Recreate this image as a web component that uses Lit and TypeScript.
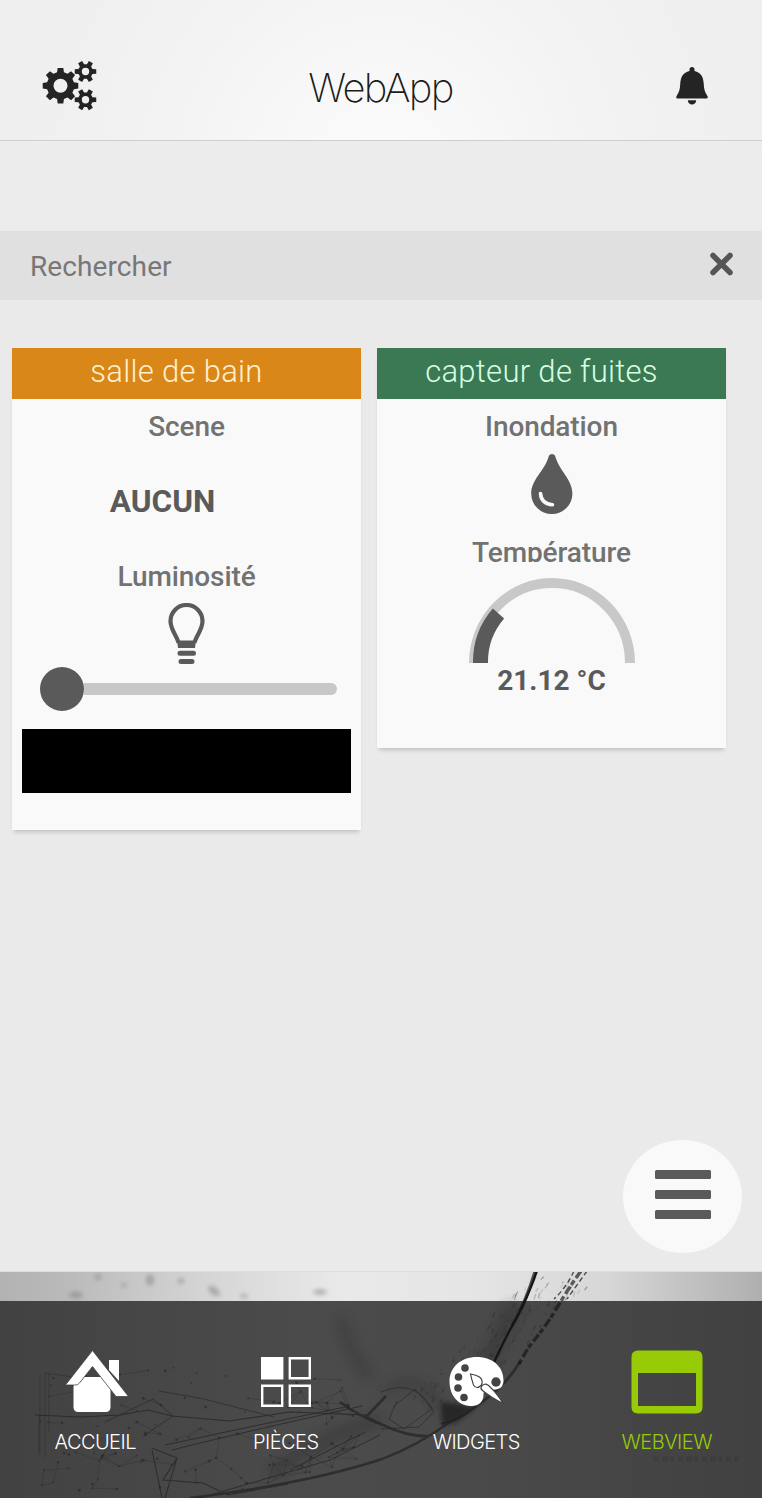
import { LitElement, html, svg, css } from "lit";
import { customElement } from "lit/decorators.js";

function gear(cx: number, cy: number, outer: number, inner: number, hole: number, teeth: number): string {
  const step = (Math.PI * 2) / teeth;
  const at = (r: number, a: number) => `${(cx + r * Math.cos(a)).toFixed(2)} ${(cy + r * Math.sin(a)).toFixed(2)}`;
  const pts: string[] = [];
  for (let i = 0; i < teeth; i++) {
    const a = i * step;
    pts.push(at(inner, a - step * 0.32), at(outer, a - step * 0.2), at(outer, a + step * 0.2), at(inner, a + step * 0.32));
  }
  return `M${pts.join("L")}Z M${cx - hole} ${cy}a${hole} ${hole} 0 1 0 ${hole * 2} 0a${hole} ${hole} 0 1 0 ${-hole * 2} 0Z`;
}

function random(seed: number) {
  let s = seed;
  return () => ((s = (s * 16807) % 2147483647) / 2147483647);
}

@customElement("mesh-backdrop")
class MeshBackdrop extends LitElement {
  static styles = css`
    :host { display: block; }
    svg { display: block; width: 100%; height: 100%; }
  `;

  private mesh() {
    const rnd = random(41);
    const nodes: [number, number][] = [];
    for (let i = 0; i < 125; i++) {
      const x = 40 + rnd() * 320;
      const top = 1365 + Math.abs(x - 170) * 0.08;
      nodes.push([x, top + rnd() * (1492 - top - Math.max(0, x - 240) * 0.25)]);
    }
    const links: unknown[] = [];
    nodes.forEach(([x, y], i) => {
      nodes
        .slice(i + 1)
        .filter(([u, v]) => Math.hypot(u - x, (v - y) * 1.3) < 29 && rnd() > 0.6)
        .forEach(([u, v]) => links.push(svg`<path d="M${x} ${y}L${u} ${v}" />`));
    });
    const dots = nodes.map(([x, y]) => svg`<circle cx=${x} cy=${y} r=${0.8 + rnd() * 0.8} />`);
    return svg`<g stroke="#222" stroke-width=".6" opacity=".4" fill="none">${links}</g><g fill="#222" opacity=".5">${dots}</g>`;
  }

  private specks() {
    const rnd = random(97);
    for (let i = 0; i < 5; i++) rnd();
    return Array.from({ length: 130 }, () => {
      const t = rnd();
      const x = 592 - t * 130 - rnd() * 60;
      const y = 1272 + t * 130 + rnd() * 12;
      return svg`<path d="M${x} ${y}l${-1 - rnd() * 2} ${2 + rnd() * 4}" opacity=${0.1 + rnd() * 0.4} />`;
    });
  }

  render() {
    return html`
      <svg viewBox="0 1271 762 227" preserveAspectRatio="none" aria-hidden="true">
        <defs>
          <linearGradient id="sky">
            <stop offset="0" stop-color="#b2b2b2" />
            <stop offset=".09" stop-color="#bababa" />
            <stop offset=".27" stop-color="#d5d5d5" />
            <stop offset=".45" stop-color="#e9e9e9" />
            <stop offset=".62" stop-color="#e5e5e5" />
            <stop offset=".8" stop-color="#d6d6d6" />
            <stop offset="1" stop-color="#afafaf" />
          </linearGradient>
          <linearGradient id="floor">
            <stop offset="0" stop-color="#424242" />
            <stop offset=".4" stop-color="#4b4b4b" />
            <stop offset=".62" stop-color="#4a4a4a" />
            <stop offset="1" stop-color="#414141" />
          </linearGradient>
          <filter id="soft" filterUnits="userSpaceOnUse" x="0" y="1260" width="762" height="240"><feGaussianBlur stdDeviation="2.2" /></filter>
          <filter id="soft-wide" filterUnits="userSpaceOnUse" x="0" y="1260" width="762" height="240"><feGaussianBlur stdDeviation="6" /></filter>
          <filter id="soft-thin" filterUnits="userSpaceOnUse" x="0" y="1260" width="762" height="240"><feGaussianBlur stdDeviation=".7" /></filter>
        </defs>
        <rect x="0" y="1271" width="762" height="30" fill="url(#sky)" />
        <rect x="0" y="1301" width="762" height="197" fill="url(#floor)" />
        <g fill="#777" opacity=".45" filter="url(#soft)">
          <ellipse cx="76" cy="1295" rx="7" ry="3.5" /><ellipse cx="98" cy="1277" rx="3" ry="3" />
          <ellipse cx="150" cy="1280" rx="4" ry="6" /><ellipse cx="124" cy="1285" rx="3" ry="2" />
          <ellipse cx="181" cy="1281" rx="3" ry="3" /><ellipse cx="214" cy="1291" rx="7" ry="4" transform="rotate(40 214 1291)" />
          <ellipse cx="320" cy="1292" rx="7" ry="3" /><ellipse cx="244" cy="1296" rx="4" ry="2" />
        </g>
        <g fill="none" stroke="#222" opacity=".32" filter="url(#soft-wide)">
          <path d="M340 1318q10 35 30 60" stroke-width="8" />
          <path d="M515 1305q-25 50-45 95" stroke-width="14" />
          <path d="M270 1475q40-35 110-55" stroke-width="12" />
          <path d="M385 1390q40-20 55 20" stroke-width="8" />
        </g>
        ${this.mesh()}
        <g fill="none" stroke="#1c1c1c" opacity=".6" filter="url(#soft-thin)">
          <path d="M35 1415l45 2 40-2 28-5 24 6 58 5 60-9 75 3 16 9" stroke-width="1.200" />
          <path d="M105 1422l48-23 20 17-30 20m16-45l45 8 70 18" stroke-width=".8" />
          <path d="M172 1450q80-20 190-44M165 1445l70-15 115-24" stroke-width="1" />
          <path d="M152 1450l10 48m-10-50l25 10-12 40m12-40l-14 22 40 3 25 12 60-11" stroke-width="1.100" />
          <path d="M190 1498q120-15 192-39 35-13 68-37" stroke-width="2.400" />
          <path d="M200 1498l130-38 50-25m-90 35l75-38" stroke-width="1" />
          <path d="M340 1402q20 15 43 23 25 12 46 11M367 1416l19-20" stroke-width="2.600" />
          <path d="M381 1392q35-15 53 20l-15 15-38 2m12-22l22-18 17 20-28 20-15-10 8-18" stroke-width=".8" />
          <path d="M40 1374v78m5-79v85m4-85v60M45 1373l35 5m-41 37v40" stroke-width=".5" />
          <path d="M520 1362q-15 25-45 45-17 14-34 17" stroke-width="2.800" />
        </g>
        <g fill="none" stroke="#151515" filter="url(#soft-thin)">
          <path d="M539 1265q-12 35-23 54t-25 50" stroke-width="2.400" />
          <path d="M537 1265q-11 37-25 61" stroke-width="3" opacity=".7" />
          <path d="M581 1271q-11 15-23 35t-22 32-18 28" stroke-width="3.400" stroke-dasharray="9 3 5 2" opacity=".65" />
          <path d="M574 1271q-8 17-20 28m33-28l-20 28" stroke-width="1.400" opacity=".7" stroke-dasharray="5 3" />
        </g>
        <g fill="none" stroke="#222" stroke-width="1.300" opacity=".7" filter="url(#soft-thin)">${this.specks()}</g>
        <path d="M441 1402l16 2 18 4-18 14-15 3z" fill="#1d1d1d" opacity=".75" filter="url(#soft)" />
        <path d="M654 1459h84" stroke="#2c2c2c" stroke-width="5" stroke-dasharray="5 3 6 2 4 4" opacity=".22" filter="url(#soft-thin)" />
        <rect x="0" y="1270.500" width="762" height="1.500" fill="#dcdcdc" />
      </svg>
    `;
  }
}

@customElement("room-card")
class RoomCard extends LitElement {
  static properties = { heading: {}, tone: {} };
  declare heading: string;
  declare tone: string;

  static styles = css`
    :host {
      display: block;
      width: 349px;
      background: #f9f9f9;
      box-shadow: 0 4px 4px -2px rgba(0, 0, 0, 0.18);
    }
    .head {
      height: 51px;
      box-sizing: border-box;
      padding-right: 20px;
      text-align: center;
      font-size: 31px;
      font-weight: 300;
      line-height: 47px;
      letter-spacing: 0.3px;
    }
    .orange { background: #d98719; color: #fff0cf; }
    .green { background: #3b7955; color: #d7ffe3; }
  `;

  render() {
    return html`<div class="head ${this.tone}">${this.heading}</div><slot></slot>`;
  }
}

@customElement("app-root")
class AppRoot extends LitElement {
  static styles = css`
    :host {
      display: flex;
      flex-direction: column;
      width: 762px;
      height: 1498px;
      overflow: hidden;
      background: linear-gradient(#ededed, #ececec 200px, #eaeaea 320px);
      font-family: Roboto, "Liberation Sans", sans-serif;
      color: #5a5a5a;
    }
    svg { display: block; }
    .top {
      height: 141px;
      box-sizing: border-box;
      padding: 32px 52px 0 41px;
      display: grid;
      grid-template-columns: 58px 1fr 36px;
      align-items: center;
      border-bottom: 1px solid #cfcfcf;
      background: radial-gradient(circle at 381px 170px, #fbfbfb 0, #f8f8f8 100px, #f3f3f3 210px, #f0f0f0 320px, #efefef 420px);
    }
    .title {
      font-family: Inter, "Liberation Sans", sans-serif;
      font-weight: 200;
      font-size: 40px;
      letter-spacing: -1.7px;
      line-height: 48px;
      padding: 3px 12px 0 0;
      text-align: center;
      color: #1c1c1c;
    }
    .search {
      margin-top: 90px;
      height: 69px;
      box-sizing: border-box;
      padding: 0 28px 3px 30px;
      display: flex;
      align-items: center;
      justify-content: space-between;
      background: #e0e0e0;
      font-size: 28px;
      color: #777;
    }
    .query { padding-top: 5px; letter-spacing: 0.1px; }
    .cards {
      flex: 1;
      display: flex;
      align-items: flex-start;
      gap: 16px;
      padding: 48px 0 0 12px;
    }
    .stack { display: flex; flex-direction: column; align-items: center; }
    .bath { height: 431px; }
    .leak { height: 349px; }
    .label {
      font-size: 28px;
      font-weight: 500;
      line-height: 32px;
      height: 32px;
      letter-spacing: -0.1px;
      color: #727272;
      margin-top: 12px;
    }
    .scene {
      margin: 41px 48px 0 0;
      font-size: 31.6px;
      font-weight: 700;
      line-height: 36px;
    }
    .light { margin-top: 41px; }
    .bulb { margin-top: 10px; }
    .slider { display: flex; align-items: center; margin: 2px 0 0 4px; width: 297px; height: 44px; }
    .knob { width: 44px; height: 44px; border-radius: 50%; background: #5a5a5a; }
    .track { flex: 1; height: 12px; border-radius: 0 6px 6px 0; background: #c7c7c7; }
    .block { width: 329px; height: 64px; margin-top: 18px; background: #000; }
    .drop { margin-top: 10px; }
    .temp { height: 25px; margin-top: 22px; overflow: hidden; }
    .gauge { margin-top: 15px; }
    .value { font-size: 28px; font-weight: 700; line-height: 32px; margin-top: 2px; }
    .fab-row { display: flex; justify-content: flex-end; padding: 0 20px 18px 0; }
    .fab {
      width: 119px;
      height: 113px;
      border-radius: 50%;
      background: #f9f9f9;
      display: flex;
      flex-direction: column;
      align-items: center;
      justify-content: center;
      gap: 11px;
      box-sizing: border-box;
      padding-bottom: 4px;
    }
    .bar { width: 56px; height: 9px; border-radius: 1.5px; background: #5a5a5a; }
    .nav { display: grid; height: 227px; }
    .backdrop, .tabs { grid-area: 1 / 1; min-height: 0; }
    .backdrop { height: 227px; }
    .tabs { display: grid; grid-template-columns: repeat(4, 1fr); padding-top: 76px; z-index: 1; }
    .tab {
      display: flex;
      flex-direction: column;
      align-items: center;
      font-family: Inter, "Liberation Sans", sans-serif;
      font-weight: 300;
      font-size: 20px;
      letter-spacing: -0.55px;
      line-height: 24px;
      color: #fff;
    }
    .active { color: #95cb08; }
    .icon { height: 70px; display: flex; align-items: center; }
    .name { margin-top: 13px; }
    .house { margin-left: 4px; }
    .palette { margin-left: 2px; }
  `;

  render() {
    return html`
      <header class="top">
        <svg width="58" height="52" viewBox="41 59.500 58 52" fill="#242424" fill-rule="evenodd">
          <path d=${gear(60.5, 85.2, 18, 13.8, 7, 8)} />
          <path d=${gear(85.5, 71, 11, 7.4, 3.7, 6)} />
          <path d=${gear(85.5, 99.2, 11, 7.4, 3.7, 6)} />
        </svg>
        <div class="title">WebApp</div>
        <svg width="36" height="40" viewBox="674 66.500 36 40" fill="#242424">
          <path d="M692 67.500c-1.600 0-2.500 1-2.500 2.600v1.300c-6.500 1.400-9 6-9.300 13.600-.2 5-1.200 7.500-3.600 11.500-.8 1.400-.4 2.500 1 2.500h28.800c1.400 0 1.800-1.100 1-2.500-2.400-4-3.400-6.500-3.600-11.500-.3-7.600-2.800-12.200-9.300-13.600v-1.300c0-1.600-.9-2.600-2.500-2.600z" />
          <path d="M687.800 100.800h8.400c0 2.600-1.800 4.200-4.200 4.200s-4.200-1.600-4.200-4.200z" />
        </svg>
      </header>
      <div class="search">
        <span class="query">Rechercher</span>
        <svg width="25" height="24" viewBox="0 0 25 24" stroke="#555" stroke-width="5.500" stroke-linecap="round"><path d="M4 3.500l17 17M21 3.500l-17 17" /></svg>
      </div>
      <main class="cards">
        <room-card heading="salle de bain" tone="orange">
          <div class="stack bath">
            <div class="label">Scene</div>
            <div class="scene">AUCUN</div>
            <div class="label light">Luminosité</div>
            <svg class="bulb" width="38" height="62" viewBox="168 602 38 62" fill="none" stroke="#5a5a5a">
              <path d="M178.500 642c-.8-6-8-13-8-22a16 16 0 0 1 32 0c0 9-7.200 16-8 22" stroke-width="4.200" />
              <path d="M177 639.500h19l-1 7.500h-17z" fill="#5a5a5a" stroke="none" />
              <path d="M180 652.300h13.500M181 660.400h11" stroke-width="5" stroke-linecap="round" />
            </svg>
            <div class="slider"><span class="knob"></span><span class="track"></span></div>
            <div class="block"></div>
          </div>
        </room-card>
        <room-card heading="capteur de fuites" tone="green">
          <div class="stack leak">
            <div class="label">Inondation</div>
            <svg class="drop" width="42" height="62" viewBox="531 453 42 62">
              <path d="M552 454c-1.800 0-2.800.9-3.400 2.800-4 14-17.400 23-17.400 36.700a20.600 20.600 0 0 0 41.200 0c0-13.700-13-22.700-17-36.700-.6-1.900-1.600-2.800-3.400-2.800z" fill="#5a5a5a" />
              <path d="M540.500 493.500c.5 7 5 11 12 11.200" fill="none" stroke="#f9f9f9" stroke-width="3.600" stroke-linecap="round" />
            </svg>
            <div class="label temp">Température</div>
            <svg class="gauge" width="168" height="86" viewBox="0 0 168 86" fill="none">
              <path d="M6 86a78 80 0 0 1 156 0" stroke="#c8c8c8" stroke-width="10" />
              <path d="M12.500 86A71.500 73 0 0 1 30.500 36.500" stroke="#5a5a5a" stroke-width="15" />
            </svg>
            <div class="value">21.12 °C</div>
          </div>
        </room-card>
      </main>
      <div class="fab-row">
        <div class="fab"><span class="bar"></span><span class="bar"></span><span class="bar"></span></div>
      </div>
      <nav class="nav">
        <mesh-backdrop class="backdrop"></mesh-backdrop>
        <div class="tabs">
          <div class="tab">
            <span class="icon">
              <svg class="house" width="66" height="70" viewBox="64 1347 66 70" fill="#fff">
                <path d="M109 1360h10v21l-10-11z" />
                <path d="M84 1377h17.500l9 10v20q0 5-5 5h-27q-5 0-5-5v-22q6 0 10.500-8z" />
                <path d="M92.500 1350.500l36 46h-12.500l-23.500-30-13 16.500q-1.500 2-4 2h-10z" stroke="#444" stroke-width=".8" />
              </svg>
            </span>
            <span class="name">ACCUEIL</span>
          </div>
          <div class="tab">
            <span class="icon">
              <svg width="50" height="50" viewBox="0 0 50 50" fill="none" stroke="#fff" stroke-width="2.400">
                <path d="M1.200 1.200h20v20h-20z" fill="#fff" /><path d="M28.800 1.200h20v20h-20zM1.200 28.800h20v20h-20zM28.800 28.800h20v20h-20z" />
              </svg>
            </span>
            <span class="name">PIÈCES</span>
          </div>
          <div class="tab">
            <span class="icon">
              <svg class="palette" width="56" height="52" viewBox="449 1356 56 52">
                <path d="M477 1357c-16 0-27.500 10-27.500 24.500 0 14 9 24.500 22 24.500 7.500 0 12-4.500 12-11 0-4 1.500-6 6-5.500 8 1 14-1 14-9 0-14-11-23.500-26.500-23.500z" fill="#fff" />
                <g fill="#444"><circle cx="465" cy="1368" r="3.800" /><circle cx="458.500" cy="1377" r="3.800" /><circle cx="458" cy="1388" r="3.800" /><circle cx="464" cy="1397.500" r="3.800" /><circle cx="496" cy="1382" r="4.700" /></g>
                <path d="M470.500 1374q6 1 9 3 4 3 2 8-5 5-8 0-2-6-3-11zM481.500 1386.500q3-4 7-1 9 8 14.500 18-12-6-20.500-13-2.500-2-1-4z" fill="#fff" stroke="#444" stroke-width="1.200" />
              </svg>
            </span>
            <span class="name">WIDGETS</span>
          </div>
          <div class="tab active">
            <span class="icon">
              <svg width="72" height="64" viewBox="0 0 72 64">
                <path d="M7 .5h58q6.500 0 6.500 6.500v50q0 6.500-6.500 6.500h-58q-6.500 0-6.500-6.500v-50q0-6.500 6.500-6.500zM7 23v33h58v-33z" fill="#97cb05" fill-rule="evenodd" />
              </svg>
            </span>
            <span class="name">WEBVIEW</span>
          </div>
        </div>
      </nav>
    `;
  }
}
